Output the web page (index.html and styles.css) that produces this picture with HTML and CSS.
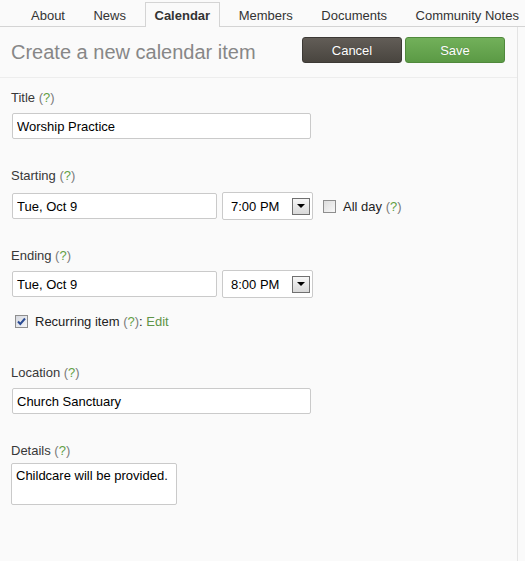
FILE: index.html
```html
<!DOCTYPE html>
<html>
<head>
<meta charset="utf-8">
<title>Create a new calendar item</title>
<link rel="stylesheet" href="styles.css">
</head>
<body>
<nav class="tabs">
  <a class="tab">About</a>
  <a class="tab">News</a>
  <a class="tab tab--active">Calendar</a>
  <a class="tab">Members</a>
  <a class="tab">Documents</a>
  <a class="tab">Community Notes</a>
</nav>
<div class="main">
  <header class="head">
    <h1 class="head__title">Create a new calendar item</h1>
    <div class="actions">
      <button class="btn btn--cancel">Cancel</button>
      <button class="btn btn--save">Save</button>
    </div>
  </header>
  <form class="form">
    <div class="field field--first">
      <div class="label">Title <span class="help">(<b>?</b>)</span></div>
      <input class="text text--wide gap-label" type="text" value="Worship Practice">
    </div>

    <div class="field">
      <div class="label">Starting <span class="help">(<b>?</b>)</span></div>
      <div class="row gap-row-lg">
        <input class="text text--date" type="text" value="Tue, Oct 9">
        <div class="select"><span>7:00 PM</span><span class="select__btn"><span class="select__arrow"></span></span></div>
        <span class="check check--allday"></span>
        <span class="check-label">All day <span class="help">(<b>?</b>)</span></span>
      </div>
    </div>

    <div class="field field--ending">
      <div class="label">Ending <span class="help">(<b>?</b>)</span></div>
      <div class="row gap-row-sm">
        <input class="text text--date" type="text" value="Tue, Oct 9">
        <div class="select"><span>8:00 PM</span><span class="select__btn"><span class="select__arrow"></span></span></div>
      </div>
    </div>

    <div class="recurring">
      <span class="check check--on"><svg width="11" height="11" viewBox="0 0 11 11"><path d="M2 5.5 L4.3 8 L9 2.5" fill="none" stroke="#2b4c94" stroke-width="2"/></svg></span>
      <span class="check-label">Recurring item <span class="help">(<b>?</b>)</span>: <a class="link">Edit</a></span>
    </div>

    <div class="field field--location">
      <div class="label">Location <span class="help">(<b>?</b>)</span></div>
      <input class="text text--wide gap-label" type="text" value="Church Sanctuary">
    </div>

    <div class="field">
      <div class="label">Details <span class="help">(<b>?</b>)</span></div>
      <textarea class="area">Childcare will be provided.</textarea>
    </div>
  </form>
</div>
</body>
</html>
```

FILE: styles.css
```css
* { box-sizing: border-box; }

html, body {
  margin: 0;
  padding: 0;
  background: #fafafa;
  font-family: "Liberation Sans", Arial, sans-serif;
  font-size: 13px;
  color: #333;
}

.tabs {
  display: flex;
  align-items: flex-end;
  height: 27px;
  padding-left: 21px;
  border-bottom: 1px solid #d4d4d4;
}

.tab {
  display: block;
  height: 24px;
  padding: 5px 9px 0;
  margin-right: 8.5px;
  border: 1px solid transparent;
  border-bottom: 0;
  line-height: 15px;
  color: #333;
  white-space: nowrap;
}

.tab--active {
  height: 25px;
  margin-bottom: -1px;
  border-color: #d4d4d4;
  background: #fafafa;
  font-weight: bold;
}

.main {
  width: 518px;
  min-height: 534px;
  border-right: 1px solid #e4e4e4;
}

.head {
  display: flex;
  justify-content: space-between;
  align-items: flex-start;
  height: 51px;
  padding: 10px 12px 0 11px;
  border-bottom: 1px solid #ededed;
}

.head__title {
  margin: 5px 0 0;
  font-size: 20px;
  line-height: 21px;
  font-weight: normal;
  color: #878787;
}

.actions {
  display: flex;
  gap: 3px;
}

.btn {
  width: 100px;
  height: 26px;
  padding: 0;
  border-radius: 3px;
  font-family: "Liberation Sans", Arial, sans-serif;
  font-size: 13px;
  color: #fff;
  text-shadow: 0 0 1px rgba(0,0,0,0.25);
}

.btn--cancel {
  background: linear-gradient(#625d57, #49453f);
  border: 1px solid #3c3935;
}

.btn--save {
  background: linear-gradient(#72b05a, #5b9a45);
  border: 1px solid #50893c;
}

.form {
  padding: 0 11px;
}

.field { margin-top: 29px; }
.field--first { margin-top: 12px; }
.field--ending { margin-top: 28px; }
.field--location { margin-top: 36px; }

.label {
  line-height: 15px;
  color: #383838;
}

.help { color: #7a7a7a; }
.help b { font-weight: normal; color: #62a043; }

.text {
  display: block;
  height: 26px;
  margin: 0 0 0 1px;
  padding: 0 4px;
  border: 1px solid #cacaca;
  border-radius: 2px;
  background: #fff;
  font-family: "Liberation Sans", Arial, sans-serif;
  font-size: 13px;
  color: #000;
  outline: none;
}

.gap-label { margin-top: 8px; }
.text--wide { width: 299px; }
.text--date { width: 205px; }

.row {
  display: flex;
  align-items: center;
  height: 28px;
}
.gap-row-lg { margin-top: 9px; }
.gap-row-sm { margin-top: 7px; }

.select {
  display: flex;
  align-items: center;
  width: 91px;
  height: 28px;
  margin-left: 5px;
  padding-left: 8px;
  border: 1px solid #cacaca;
  border-radius: 2px;
  background: #fff;
  color: #000;
}

.select__btn {
  display: flex;
  align-items: center;
  justify-content: center;
  width: 18px;
  height: 17px;
  margin-left: auto;
  margin-right: 2px;
  border: 1px solid #707070;
  background: linear-gradient(#f6f6f6, #d9d9d9);
}

.select__arrow {
  width: 0;
  height: 0;
  border-left: 4px solid transparent;
  border-right: 4px solid transparent;
  border-top: 4px solid #000;
}

.check {
  display: flex;
  align-items: center;
  justify-content: center;
  width: 13px;
  height: 13px;
  border: 1px solid #8e8e8e;
  background: linear-gradient(135deg, #dcdcdc, #f8f8f8);
}

.check--allday { margin-left: 10px; }

.check-label {
  margin-left: 7px;
  line-height: 15px;
  color: #222;
}

.recurring {
  display: flex;
  align-items: center;
  margin-top: 16px;
  margin-left: 4px;
  height: 15px;
}

.check--on { background: linear-gradient(135deg, #d6d9e0, #f4f5f8); }

.link { color: #5f9447; }

.area {
  display: block;
  width: 166px;
  height: 42px;
  margin-top: 5px;
  padding: 4px 4px;
  border: 1px solid #cacaca;
  border-radius: 2px;
  background: #fff;
  font-family: "Liberation Sans", Arial, sans-serif;
  font-size: 13px;
  line-height: 15px;
  color: #000;
  resize: none;
  outline: none;
}
```
